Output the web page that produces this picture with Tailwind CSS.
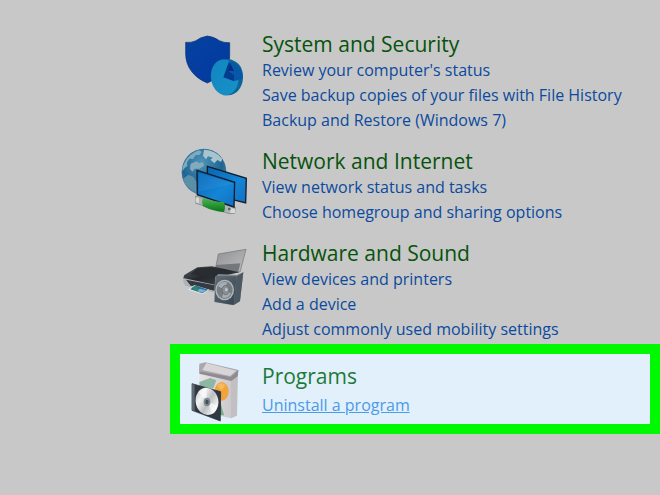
<!DOCTYPE html>
<html lang="en">
<head>
  <meta charset="UTF-8">
  <meta name="viewport" content="width=device-width, initial-scale=1.0">
  <title>Control Panel</title>
  <script src="https://cdn.jsdelivr.net/npm/@tailwindcss/browser@4"></script>
</head>
<body class="min-h-screen bg-[#c8c8c8] font-['Open_Sans','Noto_Sans',sans-serif] text-[#0b4a9e]">
  <main class="flex flex-col gap-[14px] pt-[30px] pl-[170px]">

    <!-- System and Security -->
    <section class="flex pl-[10px]">
      <svg class="w-[72px] h-[70px] mr-[10px] shrink-0" viewBox="30 15 216 210" aria-hidden="true">
        <defs>
          <linearGradient id="shield" x1="0" y1="0" x2="1" y2="1">
            <stop offset="0" stop-color="#06429f"/>
            <stop offset="1" stop-color="#0238a0"/>
          </linearGradient>
          <linearGradient id="pie" x1="0" y1="0" x2="1" y2="1">
            <stop offset="0" stop-color="#1385bd"/>
            <stop offset="1" stop-color="#1692ca"/>
          </linearGradient>
        </defs>
        <path d="M47 52Q62 54 76 48Q92 36 112 33Q132 35 148 47Q162 54 179 53V92C179 133 147 158 112 174C71 158 47 124 47 87Z" fill="url(#shield)" stroke="#052f70" stroke-width="2"/>
        <path d="M164 103Q180 100 193 108C211 116 220 135 219 160C217 188 201 209 177 211L160 211Z" fill="#0b6596"/>
        <ellipse cx="164" cy="157" rx="41" ry="54" transform="rotate(-8 164 157)" fill="url(#pie)"/>
        <path d="M177 109Q206 113 217 145L217 161L193 168L194 149L178 140L193 136Z" fill="#0758a8"/>
        <path d="M177 109L160 157L193 169L194 150L176 139L191 137Z" fill="#033b91"/>
        <path d="M180 113L176 139L193 137Z" fill="#062f7d"/>
      </svg>
      <div>
        <h2 class="text-[21px] leading-[28px] text-[#07530c]">System and Security</h2>
        <ul class="text-base leading-[25px]">
          <li><a href="#">Review your computer's status</a></li>
          <li><a href="#">Save backup copies of your files with File History</a></li>
          <li><a href="#">Backup and Restore (Windows 7)</a></li>
        </ul>
      </div>
    </section>

    <!-- Network and Internet -->
    <section class="flex pl-[10px]">
      <svg class="w-[72px] h-[70px] mr-[10px] shrink-0" viewBox="30 21 216 210" aria-hidden="true">
        <defs>
          <radialGradient id="globe" cx=".45" cy=".3" r=".7">
            <stop offset="0" stop-color="#4f94b8"/>
            <stop offset=".65" stop-color="#1f6592"/>
            <stop offset="1" stop-color="#5388a5"/>
          </radialGradient>
          <linearGradient id="screen" x1="0" y1="0" x2="1" y2="1">
            <stop offset="0" stop-color="#0863b1"/>
            <stop offset=".6" stop-color="#1585d6"/>
            <stop offset="1" stop-color="#116fc1"/>
          </linearGradient>
          <linearGradient id="cable" x1="0" y1="0" x2="0" y2="1">
            <stop offset="0" stop-color="#4cb653"/>
            <stop offset="1" stop-color="#087718"/>
          </linearGradient>
        </defs>
        <ellipse cx="102" cy="96" rx="67" ry="70" fill="url(#globe)"/>
        <path d="M43 69Q56 42 86 31L96 35L88 45L76 46L70 57L58 56L51 68L52 78L44 84L37 94Q35 81 43 69Z" fill="#7fa9bc"/>
        <path d="M102 29Q139 31 157 57L153 66L142 60L133 70L121 59L128 53L114 49L108 58L99 47Z" fill="#a9c4cd"/>
        <path d="M62 71L79 64L89 70L97 66L103 76L89 86L74 86L67 95L60 87Z" fill="#84abbd"/>
        <path d="M39 117L55 104L71 111L81 127V157Q49 148 39 117Z" fill="#5b8fa8"/>
        <path d="M112 79L229 115L227 189L113 160Z" fill="url(#screen)" stroke="#111e2d" stroke-width="4"/>
        <path d="M77 168L196 202L194 220L178 221L77 190Z" fill="#aeb3b3" stroke="#777e80" stroke-width="2"/>
        <path d="M81 91L194 127L192 201L82 164Z" fill="url(#screen)" stroke="#111e2d" stroke-width="4"/>
        <path d="M86 98L189 131L87 155Z" fill="#4ca9e8" opacity=".18"/>
        <path d="M99 174Q134 186 161 186Q169 197 162 216Q130 215 99 199Q94 185 99 174Z" fill="url(#cable)"/>
        <path d="M77 173Q83 170 87 174V190L77 187ZM181 203L195 207V219L181 219Z" fill="#d7d9d7"/>
        <circle cx="178" cy="207" r="4" fill="#5b6264"/>
      </svg>
      <div>
        <h2 class="text-[21px] leading-[28px] text-[#07530c]">Network and Internet</h2>
        <ul class="text-base leading-[25px]">
          <li><a href="#">View network status and tasks</a></li>
          <li><a href="#">Choose homegroup and sharing options</a></li>
        </ul>
      </div>
    </section>

    <!-- Hardware and Sound -->
    <section class="flex pl-[10px]">
      <svg class="w-[72px] h-[70px] mr-[10px] shrink-0" viewBox="30 -3 216 210" aria-hidden="true">
        <defs>
          <linearGradient id="paper" x1="0" y1="0" x2="1" y2="1">
            <stop offset="0" stop-color="#8f9193"/>
            <stop offset="1" stop-color="#bbbdbf"/>
          </linearGradient>
          <linearGradient id="printer" x1="0" y1="0" x2="1" y2="1">
            <stop offset="0" stop-color="#606469"/>
            <stop offset=".45" stop-color="#24282e"/>
            <stop offset="1" stop-color="#484c51"/>
          </linearGradient>
          <linearGradient id="speaker" x1="0" y1="0" x2="1" y2="1">
            <stop offset="0" stop-color="#626c75"/>
            <stop offset="1" stop-color="#36434e"/>
          </linearGradient>
        </defs>
        <path d="M145 42L228 28L210 96L137 84Z" fill="url(#paper)" stroke="#717376" stroke-width="2"/>
        <path d="M139 75L211 70L204 98L132 90Z" fill="#74787c"/>
        <path d="M82 82L126 79L208 97L145 111L137 137L39 116L43 105Z" fill="url(#printer)"/>
        <path d="M82 84L122 82L181 96L127 113L61 103Z" fill="#292c30"/>
        <path d="M39 114L134 134V158L45 137Q38 125 39 114Z" fill="#aeb4b8"/>
        <path d="M48 119L134 136V152L62 137Z" fill="#353a40"/>
        <path d="M73 135L118 149L98 163L54 149Z" fill="#e1e5e7"/>
        <path d="M76 136L114 149L97 160L61 148Z" fill="#276c9e"/>
        <path d="M65 143L78 138L90 151L80 154Z" fill="#358862"/>
        <path d="M89 146L109 151L97 158L82 154Z" fill="#79b1cf"/>
        <path d="M145 102L201 105L220 97L210 183L190 196L133 186L135 111Z" fill="#7b858d"/>
        <path d="M137 108L200 109L191 195L134 185Z" fill="url(#speaker)"/>
        <path d="M200 109L220 97L210 184L191 195Z" fill="#4d5962"/>
        <ellipse cx="164" cy="150" rx="28" ry="31" fill="#b1b8bd"/>
        <ellipse cx="164" cy="150" rx="24" ry="27" fill="#777f85"/>
        <path d="M144 139Q153 122 171 127L165 150ZM183 160Q173 179 156 172L164 150Z" fill="#a6adb1"/>
        <ellipse cx="167" cy="150" rx="11" ry="14" fill="#889097" stroke="#5a636b" stroke-width="2"/>
        <ellipse cx="169" cy="149" rx="4" ry="5" fill="#c4c9cb"/>
      </svg>
      <div>
        <h2 class="text-[21px] leading-[28px] text-[#07530c]">Hardware and Sound</h2>
        <ul class="text-base leading-[25px]">
          <li><a href="#">View devices and printers</a></li>
          <li><a href="#">Add a device</a></li>
          <li><a href="#">Adjust commonly used mobility settings</a></li>
        </ul>
      </div>
    </section>

    <!-- Programs (highlighted) -->
    <section class="flex -mt-3 pb-px border-[10px] border-[#00f900] bg-[#e2f0fc]">
      <svg class="w-[72px] h-[69px] mr-[10px] shrink-0" viewBox="45 42 216 207" aria-hidden="true">
        <defs>
          <linearGradient id="box" x1="0" y1="0" x2="1" y2="0">
            <stop offset="0" stop-color="#e7e5e6"/>
            <stop offset="1" stop-color="#cbc9cb"/>
          </linearGradient>
          <linearGradient id="disc" x1="0" y1="0" x2="1" y2="1">
            <stop offset="0" stop-color="#b5b9bb"/>
            <stop offset=".3" stop-color="#f2f3f3"/>
            <stop offset=".55" stop-color="#babfc1"/>
            <stop offset=".8" stop-color="#f2f2f2"/>
            <stop offset="1" stop-color="#a8adb0"/>
          </linearGradient>
        </defs>
        <path d="M103 95L198 120V235L103 214Z" fill="url(#box)"/>
        <path d="M198 119L219 93L216 227L198 235Z" fill="#c1bfc2"/>
        <path d="M102 94L103 71L121 67L221 90L217 107L199 121Z" fill="#aaa8ac"/>
        <path d="M112 90L124 69L214 92L195 108Z" fill="#d7d5d8"/>
        <path d="M103 94L197 111L220 91L218 109L199 123L103 101Z" fill="#8e8c91"/>
        <path d="M103 126L136 114L154 121L145 145L104 140Z" fill="#8fb5a4"/>
        <path d="M166 187L177 226L163 225Z" fill="#74a98a"/>
        <ellipse cx="170" cy="154" rx="21" ry="28" fill="#f1a43d"/>
        <path d="M157 136Q168 124 181 136L169 152Z" fill="#f7b95a"/>
        <path d="M81 131L167 155L166 243L81 211Z" fill="#303941" stroke="#1d252d" stroke-width="2"/>
        <path d="M81 132L89 135V213L81 210Z" fill="#606972"/>
        <ellipse cx="126" cy="184" rx="34" ry="41" transform="rotate(-10 126 184)" fill="url(#disc)"/>
        <path d="M126 184L101 157Q112 144 124 144ZM126 184L158 197Q153 216 143 222Z" fill="#fff" opacity=".6"/>
        <ellipse cx="126" cy="186" rx="10" ry="13" fill="#818990"/>
        <ellipse cx="126" cy="186" rx="5" ry="7" fill="#454e57"/>
      </svg>
      <div class="pt-2">
        <h2 class="text-[21px] leading-[28px] text-[#1d7a38]">Programs</h2>
        <ul class="mt-[3px] text-base leading-[25px] text-[#4a9be8]">
          <li><a href="#" class="underline">Uninstall a program</a></li>
        </ul>
      </div>
    </section>

  </main>
</body>
</html>
